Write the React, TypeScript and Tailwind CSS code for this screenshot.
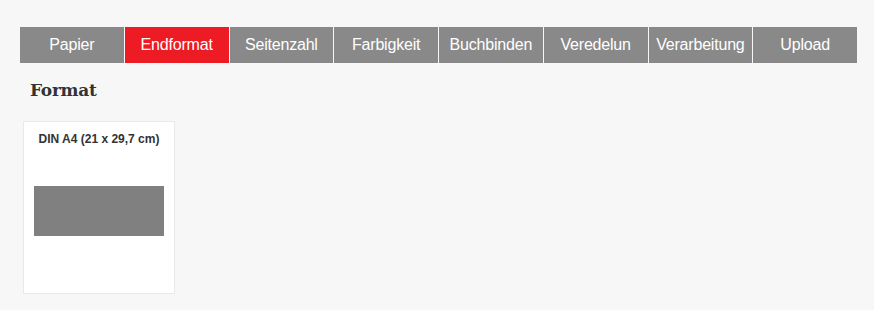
import React from "react";

const tabs = ["Papier", "Endformat", "Seitenzahl", "Farbigkeit", "Buchbinden", "Veredelun", "Verarbeitung", "Upload"];

export default function App() {
  return (
    <div className="w-[874px] h-[310px] bg-[#f7f7f7] overflow-hidden" style={{ fontFamily: '"Liberation Sans", Arial, sans-serif' }}>
      <div className="pt-[27px] px-[20px] w-[877px]">
        <div className="flex gap-px w-[837px]">
          {tabs.map((t) => (
            <div
              key={t}
              className={`flex-1 h-[36px] flex items-center justify-center text-white text-[16px] tracking-[-0.2px] ${t === "Endformat" ? "bg-[#ec1b24]" : "bg-[#898989]"}`}
            >
              {t}
            </div>
          ))}
        </div>
      </div>
      <h2 className="ml-[30px] mt-[16px] text-[17px] font-bold text-[#333] leading-[22px] tracking-[-0.3px]" style={{ fontFamily: '"DejaVu Serif", serif' }}>
        Format
      </h2>
      <div className="ml-[23px] mt-[20px] w-[152px] h-[173px] bg-white border border-[#e9e9e9] flex flex-col items-center">
        <div className="mt-[10px] text-[12px] font-bold text-[#333] leading-[14px]">DIN A4 (21 x 29,7 cm)</div>
        <div className="mt-[40px] w-[130px] h-[50px] bg-[#808080]" />
      </div>
    </div>
  );
}
